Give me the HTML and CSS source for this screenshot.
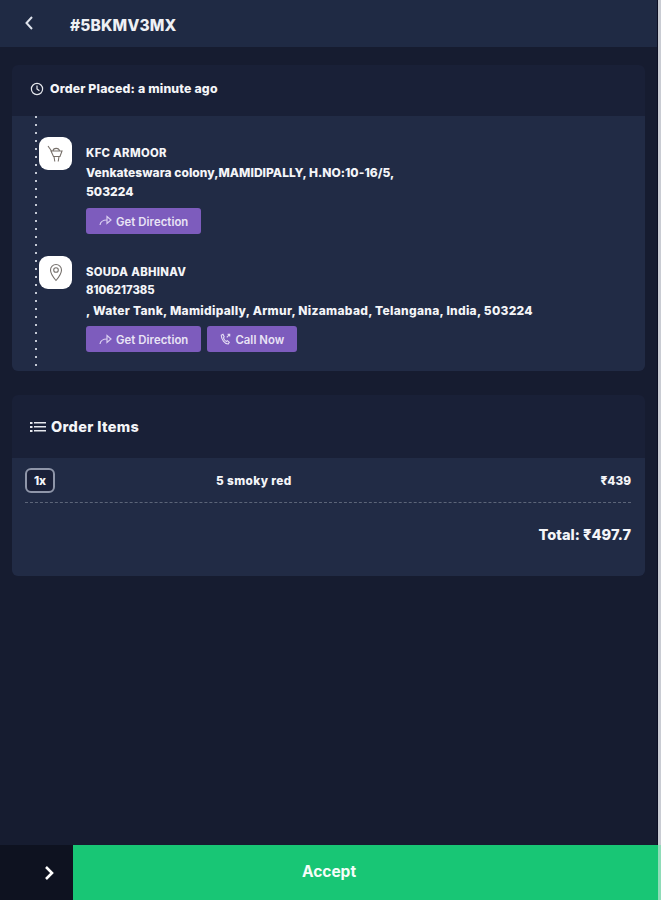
FILE: index.html
```html
<!DOCTYPE html>
<html lang="en">
<head>
<meta charset="utf-8">
<title>#5BKMV3MX</title>
<link rel="stylesheet" href="styles.css">
</head>
<body>
<div class="app">
  <header class="topbar">
    <svg class="back" width="10" height="16" viewBox="0 0 10 16"><path d="M8 2 2.500 8 8 14" fill="none" stroke="#dfe3ec" stroke-width="2"/></svg>
    <h1 class="order-id">#5BKMV3MX</h1>
  </header>
  <main class="content">
    <section class="card">
      <div class="card-head placed">
        <svg width="14" height="14" viewBox="0 0 14 14" fill="none" stroke="#e6e8ee" stroke-width="1.200"><circle cx="7" cy="7" r="5.600"/><path d="M7 3.600V7l2.400 1.800"/></svg>
        <span>Order Placed: a minute ago</span>
      </div>
      <div class="card-body route">
        <div class="stop">
          <div class="stop-icon">
            <svg width="20" height="20" viewBox="0 0 20 20" fill="none" stroke="#77706a" stroke-width="1.100"><path d="M2 2l3.500 5"/><path d="M5 7h11l-2 5.500H7.500z"/><path d="M7 7c.3-3.500 6-3.500 6.500 0"/><path d="M8 12.500 8.800 17.500M13 12.500l-.8 5"/></svg>
          </div>
          <div class="stop-info">
            <p class="name-line">KFC ARMOOR</p>
            <p class="addr addr-short">Venkateswara colony,MAMIDIPALLY, H.NO:10-16/5, 503224</p>
            <div class="actions">
              <a class="btn"><svg width="13" height="11" viewBox="0 0 13 11" fill="none" stroke="#d9cdf0" stroke-width="1.200"><path d="M1 10c.5-3.500 3.500-5 7-5"/><path d="M8 1.500 12 5 8 8.500z"/></svg>Get Direction</a>
            </div>
          </div>
        </div>
        <div class="stop">
          <div class="stop-icon">
            <svg width="16" height="20" viewBox="0 0 16 20" fill="none" stroke="#77726e" stroke-width="1.100"><path d="M8 18.500C5 15 2.500 12 2.500 8a5.500 5.500 0 0 1 11 0c0 4-2.500 7-5.500 10.500z"/><circle cx="8" cy="8" r="2.300"/></svg>
          </div>
          <div class="stop-info">
            <p class="name-line">SOUDA ABHINAV</p>
            <p class="phone">8106217385</p>
            <p class="addr-long">, Water Tank, Mamidipally, Armur, Nizamabad, Telangana, India, 503224</p>
            <div class="actions">
              <a class="btn"><svg width="13" height="11" viewBox="0 0 13 11" fill="none" stroke="#d9cdf0" stroke-width="1.200"><path d="M1 10c.5-3.500 3.500-5 7-5"/><path d="M8 1.500 12 5 8 8.500z"/></svg>Get Direction</a>
              <a class="btn"><svg width="11" height="14" viewBox="0 0 13 14" fill="none" stroke="#e3dbf3" stroke-width="1.300"><path d="M1.500 2.500 3.500 1.500l1.500 3-1 1c.5 2 2 3.800 3.500 4.500l1.200-1 2.300 2-1.500 2C5.500 12.500 1.500 7.500 1.500 2.500z"/><path d="M8 5l3.500-3.500M9 1.500h2.500V4"/></svg>Call Now</a>
            </div>
          </div>
        </div>
      </div>
    </section>
    <section class="card">
      <div class="card-head items">
        <svg width="16" height="12" viewBox="0 0 16 12" fill="#e6e8ee"><rect x="0" y="1" width="2.500" height="2"/><rect x="4" y="1" width="12" height="1.500"/><rect x="0" y="5" width="2.500" height="2"/><rect x="4" y="5" width="12" height="1.500"/><rect x="0" y="9" width="2.500" height="2"/><rect x="4" y="9" width="12" height="1.500"/></svg>
        <span>Order Items</span>
      </div>
      <div class="card-body order">
        <div class="line">
          <span class="qty">1x</span>
          <span class="name">5 smoky red</span>
          <span class="price">₹439</span>
        </div>
        <div class="total">Total: ₹497.7</div>
      </div>
    </section>
  </main>
  <footer class="bottom">
    <div class="toggle"><svg width="12" height="16" viewBox="0 0 12 16"><path d="M3 2 9 8 3 14" fill="none" stroke="#fff" stroke-width="2.600"/></svg></div>
    <button class="accept">Accept</button>
  </footer>
</div>
</body>
</html>
```
FILE: styles.css
```css
* { box-sizing: border-box; }
html, body { margin: 0; height: 100%; background: #c9ccd3; }
body { font-family: "Inter", "Open Sans", sans-serif; color: #f4f5f8; overflow: hidden; }
.app { width: 658px; height: 900px; display: flex; flex-direction: column; background: #161c30; border-right: 1px solid #0c0f24; position: relative; }
.topbar { height: 47px; flex: none; background: #1f2a44; display: flex; align-items: center; padding: 0 0 0 24px; }
.back { margin-right: 36px; margin-top: -1px; }
.order-id { margin: 4px 0 0; font-size: 15.500px; font-weight: 800; letter-spacing: .15px; color: #eef0f4; }
.content { flex: 1; padding: 18px 12px 0; display: flex; flex-direction: column; gap: 24px; }
.card { width: 633px; border-radius: 6px; overflow: hidden; background: #192037; }
.card-head { display: flex; align-items: center; font-weight: 800; }
.placed { height: 51px; padding: 0 0 4px 18px; gap: 6px; font-size: 12.300px; letter-spacing: .16px; }
.items { height: 63px; padding-left: 18px; gap: 5px; font-size: 14.500px; letter-spacing: .35px; }
.card-body { background: #212b45; }
.route { height: 255px; position: relative; padding: 21px 0 0 27px; }
.route::before { content: ""; position: absolute; left: 23px; top: 0; bottom: 0; width: 2px; background: repeating-linear-gradient(to bottom, #c3c8d4 0 2px, transparent 2px 8px); }
.stop { display: flex; position: relative; margin-bottom: 22px; }
.stop-icon { width: 33px; height: 33px; flex: none; background: #fff; border-radius: 9px; display: flex; align-items: center; justify-content: center; }
.stop-info { margin-left: 14px; margin-top: 6px; font-size: 12px; font-weight: 800; line-height: 19.500px; }
.stop-info p { margin: 0; }
.name-line { font-size: 11.300px; letter-spacing: .32px; padding-top: 1px; line-height: 18.500px; }
.phone { font-size: 11.300px; letter-spacing: 0; }
.addr { width: 320px; }
.addr-short { letter-spacing: .03px; }
.addr-long { letter-spacing: .28px; }
.actions { display: flex; gap: 6px; margin-top: 6px; }
.btn { height: 26px; display: inline-flex; align-items: center; gap: 4px; padding: 4px 13px 0; background: #7d5cbd; border-radius: 3px; font-size: 11.300px; font-weight: 600; letter-spacing: .08px; color: #e9e4f5; }
.btn svg { margin-top: -4px; }
.order { height: 118px; padding: 10px 14px 0 13px; }
.line { display: grid; grid-template-columns: 191px auto 1fr; align-items: center; height: 35px; padding-bottom: 1px; border-bottom: 1px dashed #5c6579; font-size: 11.800px; font-weight: 800; }
.qty { width: 30px; height: 25px; margin-bottom: 9px; border: 2px solid #8f96a9; border-radius: 6px; display: flex; align-items: center; justify-content: center; background: #1a2038; }
.name { margin-bottom: 9px; letter-spacing: .38px; }
.price { text-align: right; margin-bottom: 9px; }
.total { text-align: right; margin-top: 23px; font-size: 14.600px; font-weight: 800; }
.bottom { height: 55px; flex: none; display: flex; width: 661px; }
.toggle { width: 73px; background: #0e1220; display: flex; align-items: center; justify-content: flex-end; padding-right: 18px; }
.accept { flex: 1; border: 0; border-right: 3px solid #8fdcb8; background: #18c675; color: #f6fdf9; font-family: inherit; font-size: 15.500px; font-weight: 700; padding: 0 73px 2px 0; margin: 0; }
```
